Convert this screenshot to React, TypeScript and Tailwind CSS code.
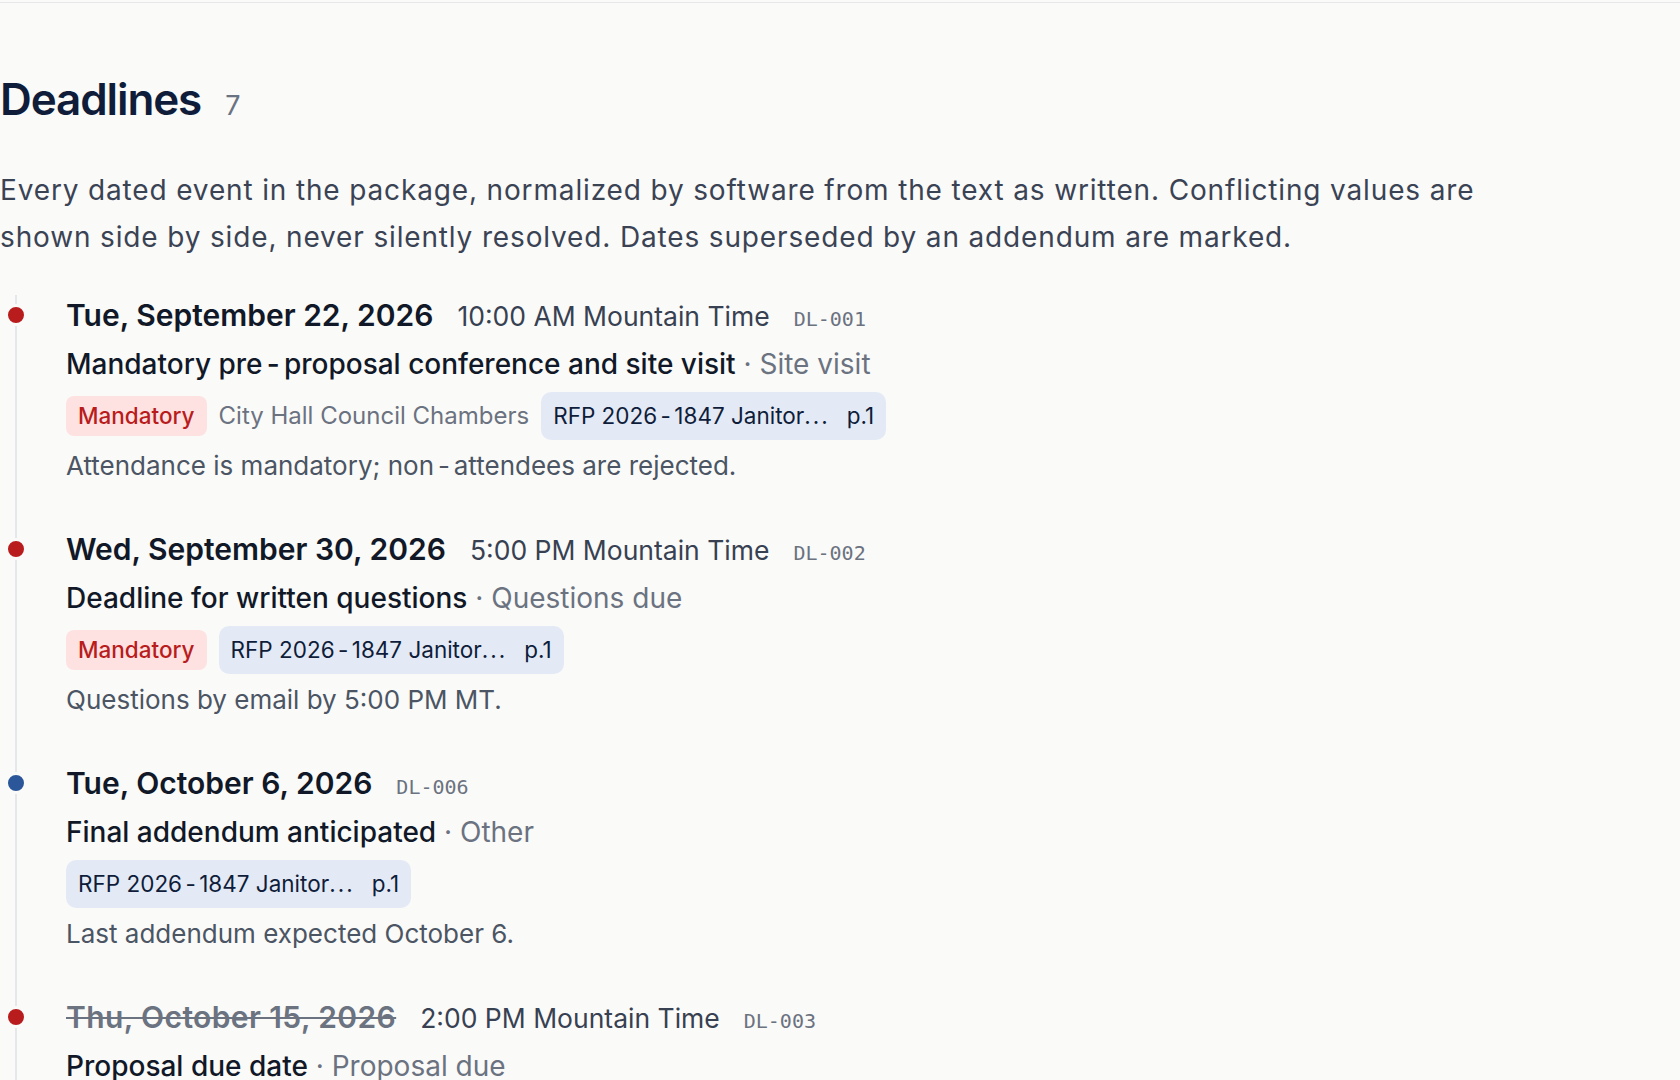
import React from 'react'

type Deadline = {
  id: string
  date: string
  time?: string
  title: string
  kind: string
  mandatory?: boolean
  location?: string
  note: string
  superseded?: boolean
  tone: 'red' | 'blue'
  page: string
}

const deadlines: Deadline[] = [
  {
    id: 'DL-001',
    date: 'Tue, September 22, 2026',
    time: '10:00 AM Mountain Time',
    title: 'Mandatory pre-proposal conference and site visit',
    kind: 'Site visit',
    mandatory: true,
    location: 'City Hall Council Chambers',
    note: 'Attendance is mandatory; non-attendees are rejected.',
    tone: 'red',
    page: 'p.1',
  },
  {
    id: 'DL-002',
    date: 'Wed, September 30, 2026',
    time: '5:00 PM Mountain Time',
    title: 'Deadline for written questions',
    kind: 'Questions due',
    mandatory: true,
    note: 'Questions by email by 5:00 PM MT.',
    tone: 'red',
    page: 'p.1',
  },
  {
    id: 'DL-006',
    date: 'Tue, October 6, 2026',
    title: 'Final addendum anticipated',
    kind: 'Other',
    note: 'Last addendum expected October 6.',
    tone: 'blue',
    page: 'p.1',
  },
  {
    id: 'DL-003',
    date: 'Thu, October 15, 2026',
    time: '2:00 PM Mountain Time',
    title: 'Proposal due date',
    kind: 'Proposal due',
    mandatory: true,
    location: 'City Clerk, 2nd Floor',
    note: 'Superseded by Addendum 2.',
    superseded: true,
    tone: 'red',
    page: 'p.1',
  },
]

// hyphens get a little air on each side, like the source text
function spaced(text: string) {
  const parts = text.split('-')
  return parts.map((part, i) => (
    <React.Fragment key={i}>
      {part}
      {i < parts.length - 1 && <span className="mx-[0.15em]">-</span>}
    </React.Fragment>
  ))
}

function DeadlineItem({ d }: { d: Deadline }) {
  return (
    <li className="relative pl-[49px] pb-[43px]">
      {/* marker on the timeline */}
      <span
        className={`absolute left-[-12px] top-[9px] w-[22px] h-[22px] rounded-full border-[3px] border-[#fafaf9] ${
          d.tone === 'red' ? 'bg-[#b91c1c]' : 'bg-[#2b579a]'
        }`}
      />

      <div className="flex items-baseline gap-[24px] h-[40px] leading-[40px]">
        <span
          className={`text-[30px] font-semibold ${
            d.superseded
              ? 'text-[#6b7280] tracking-[0.4px] line-through decoration-[#6b7280] decoration-2'
              : 'text-[#111827]'
          }`}
        >
          {d.date}
        </span>
        {d.time && <span className="text-[26.5px] text-[#374151]">{d.time}</span>}
        <span className="text-[20px] text-[#6b7280] font-['DejaVu_Sans_Mono',monospace]">{d.id}</span>
      </div>

      <p className="mt-[9px] h-[40px] leading-[40px] text-[28px]">
        <span className="font-medium text-[#111827]">{spaced(d.title)}</span>
        <span className="text-[#6b7280]"> · {d.kind}</span>
      </p>

      <div className="mt-[8px] h-[48px] flex items-center gap-3">
        {d.mandatory && (
          <span className="h-[40px] px-3 flex items-center rounded-[8px] bg-[#fee2e2] text-[#b91c1c] text-[22.5px] font-medium">
            Mandatory
          </span>
        )}
        {d.location && <span className="text-[24px] text-[#6b7280]">{d.location}</span>}
        <span className="h-[48px] px-3 flex items-center gap-[17px] rounded-[10px] bg-[#e4eaf5] text-[#0f1d3a] text-[22.5px]">
          <span>
            {spaced('RFP 2026-1847 Janitor')}
            <span className="tracking-[2px]">...</span>
          </span>
          <span>{d.page}</span>
        </span>
      </div>

      <p className="mt-[6px] h-[40px] leading-[40px] text-[26px] text-[#4b5563]">{spaced(d.note)}</p>
    </li>
  )
}

export default function App() {
  return (
    <div className="min-h-screen bg-[#fafaf9] font-['Inter',sans-serif]">
      <div className="h-[3px] border-b-[1.5px] border-[#e5e7eb]" />

      <div className="pt-[70px]">
        <div className="flex items-baseline gap-[24px]">
          <h1 className="text-[44px] leading-[53px] font-semibold tracking-tight text-[#0f1d3a]">Deadlines</h1>
          <span className="text-[27px] text-[#6b7280]">7</span>
        </div>

        <p className="mt-[40px] max-w-[1536px] text-[28px] leading-[47px] tracking-[0.85px] text-[#3a4354]">
          Every dated event in the package, normalized by software from the text as written. Conflicting values are
          shown side by side, never silently resolved. Dates superseded by an addendum are marked.
        </p>

        <ol className="mt-[34px] ml-[15px] border-l-2 border-[#e5e7eb]">
          {deadlines.map(d => (
            <DeadlineItem key={d.id} d={d} />
          ))}
        </ol>
      </div>
    </div>
  )
}
